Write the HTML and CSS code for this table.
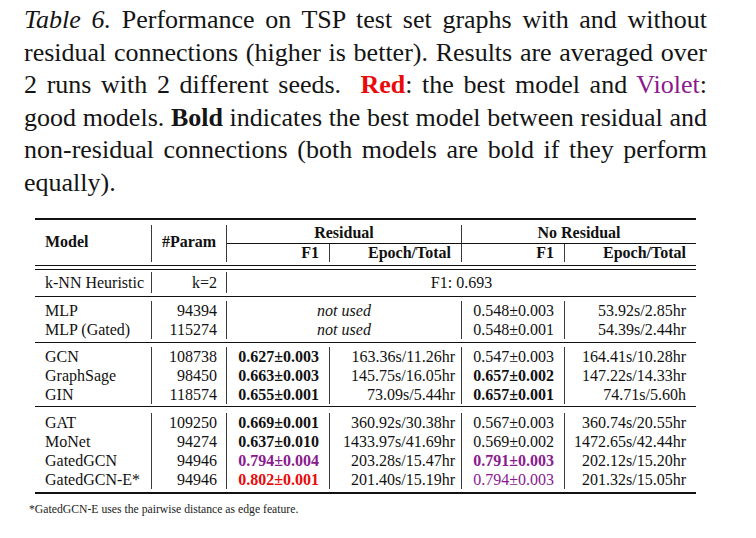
FILE: index.html
```html
<!DOCTYPE html>
<html lang="en">
<head>
<meta charset="utf-8">
<title>Table 6</title>
<link rel="stylesheet" href="styles.css">
</head>
<body>
<p class="caption"><span class="label">Table 6.</span> Performance on TSP test set graphs with and without residual connections (higher is better). Results are averaged over 2 runs with 2 different seeds.&nbsp; <b class="red">Red</b>: the best model and <span class="violet">Violet</span>: good models. <b>Bold</b> indicates the best model between residual and non-residual connections (both models are bold if they perform equally).</p>

<div class="table-wrap">
<table class="results">
  <colgroup>
    <col class="c-model"><col class="c-param"><col class="c-f1"><col class="c-ep"><col class="c-f1b"><col class="c-ep2">
  </colgroup>
  <tr class="rule"><td colspan="6"><div class="line thick top"></div></td></tr>
  <tr class="head1">
    <th rowspan="2" class="model vr">Model</th>
    <th rowspan="2" class="param vr">#Param</th>
    <th colspan="2" class="group vr">Residual</th>
    <th colspan="2" class="group">No Residual</th>
  </tr>
  <tr class="head2">
    <th class="f1 vr">F1</th>
    <th class="ep vr">Epoch/Total</th>
    <th class="f1 vr">F1</th>
    <th class="ep2">Epoch/Total</th>
  </tr>
  <tr class="rule"><td colspan="6"><div class="line double"></div></td></tr>
  <tr class="knn">
    <td class="model vr">k-NN Heuristic</td>
    <td class="param vr">k=2</td>
    <td colspan="4" class="center">F1: 0.693</td>
  </tr>
  <tr class="rule"><td colspan="6"><div class="line mid r1"></div></td></tr>
  <tr>
    <td class="model vr">MLP</td><td class="param vr">94394</td>
    <td colspan="2" class="center nu vr">not used</td>
    <td class="f1 vr">0.548±0.003</td><td class="ep2">53.92s/2.85hr</td>
  </tr>
  <tr>
    <td class="model vr">MLP (Gated)</td><td class="param vr">115274</td>
    <td colspan="2" class="center nu vr">not used</td>
    <td class="f1 vr">0.548±0.001</td><td class="ep2">54.39s/2.44hr</td>
  </tr>
  <tr class="rule"><td colspan="6"><div class="line mid r2"></div></td></tr>
  <tr>
    <td class="model vr">GCN</td><td class="param vr">108738</td>
    <td class="f1 vr"><b>0.627±0.003</b></td><td class="ep vr">163.36s/11.26hr</td>
    <td class="f1 vr">0.547±0.003</td><td class="ep2">164.41s/10.28hr</td>
  </tr>
  <tr>
    <td class="model vr">GraphSage</td><td class="param vr">98450</td>
    <td class="f1 vr"><b>0.663±0.003</b></td><td class="ep vr">145.75s/16.05hr</td>
    <td class="f1 vr"><b>0.657±0.002</b></td><td class="ep2">147.22s/14.33hr</td>
  </tr>
  <tr>
    <td class="model vr">GIN</td><td class="param vr">118574</td>
    <td class="f1 vr"><b>0.655±0.001</b></td><td class="ep vr">73.09s/5.44hr</td>
    <td class="f1 vr"><b>0.657±0.001</b></td><td class="ep2">74.71s/5.60h</td>
  </tr>
  <tr class="rule"><td colspan="6"><div class="line mid r3"></div></td></tr>
  <tr>
    <td class="model vr">GAT</td><td class="param vr">109250</td>
    <td class="f1 vr"><b>0.669±0.001</b></td><td class="ep vr">360.92s/30.38hr</td>
    <td class="f1 vr">0.567±0.003</td><td class="ep2">360.74s/20.55hr</td>
  </tr>
  <tr>
    <td class="model vr">MoNet</td><td class="param vr">94274</td>
    <td class="f1 vr"><b>0.637±0.010</b></td><td class="ep vr">1433.97s/41.69hr</td>
    <td class="f1 vr">0.569±0.002</td><td class="ep2">1472.65s/42.44hr</td>
  </tr>
  <tr>
    <td class="model vr">GatedGCN</td><td class="param vr">94946</td>
    <td class="f1 vr"><b class="violet">0.794±0.004</b></td><td class="ep vr">203.28s/15.47hr</td>
    <td class="f1 vr"><b class="violet">0.791±0.003</b></td><td class="ep2">202.12s/15.20hr</td>
  </tr>
  <tr>
    <td class="model vr">GatedGCN-E*</td><td class="param vr">94946</td>
    <td class="f1 vr"><b class="red">0.802±0.001</b></td><td class="ep vr">201.40s/15.19hr</td>
    <td class="f1 vr"><span class="violet">0.794±0.003</span></td><td class="ep2">201.32s/15.05hr</td>
  </tr>
  <tr class="rule"><td colspan="6"><div class="line thick bottom"></div></td></tr>
</table>
<p class="footnote">*GatedGCN-E uses the pairwise distance as edge feature.</p>
</div>
</body>
</html>
```

FILE: styles.css
```css
html, body {
  background: #ffffff;
}

body {
  margin: 0;
  padding: 4px 0 0 24px;
  font-family: "Liberation Serif", "Times New Roman", serif;
  color: #141414;
}

.caption {
  margin: 0;
  width: 683px;
  font-size: 26px;
  line-height: 32.6px;
  text-align: justify;
}

.caption .label {
  font-style: italic;
}

.red {
  color: #ea0a0a;
  font-weight: bold;
}

.violet {
  color: #8a1a8e;
}

.table-wrap {
  margin-top: 18px;
}

.results {
  margin-left: 11px;
  width: 661px;
  table-layout: fixed;
  border-collapse: separate;
  border-spacing: 0;
  font-size: 16px;
  color: #111;
}

.c-model { width: 117px; }
.c-param { width: 75px; }
.c-f1 { width: 103px; }
.c-ep { width: 132px; }
.c-f1b { width: 103px; }
.c-ep2 { width: 131px; }

.results th,
.results td {
  padding: 0;
  white-space: nowrap;
  vertical-align: middle;
  line-height: 19px;
  height: 19px;
}

.results th {
  font-weight: bold;
}

.results .vr {
  border-right: 1px solid #3a3a3a;
}

.results .model {
  text-align: left;
  padding-left: 10px;
}

.results th.model,
.results th.param {
  height: 35px;
  line-height: 18px;
  padding-bottom: 2px;
}

.results .param {
  text-align: right;
  padding-right: 9px;
}

.results th.param {
  text-align: center;
  padding-right: 0;
}

.results .f1 {
  text-align: right;
  padding-right: 10px;
}

.results .ep {
  text-align: right;
  padding-right: 6px;
}

.results th.ep {
  padding-right: 10px;
}

.results .ep2 {
  text-align: right;
  padding-right: 10px;
}

.results .center {
  text-align: center;
}

.results .nu {
  font-style: italic;
}

.results .group {
  text-align: center;
  border-bottom: 1px solid #111;
  height: 16px;
  line-height: 16px;
  padding-bottom: 2px;
}

.results .head2 th {
  height: 17px;
  line-height: 17px;
  padding-bottom: 1px;
}

.results .knn td {
  height: 21px;
  line-height: 21px;
}

.results .rule td {
  height: auto;
  line-height: 0;
  padding: 0;
}

.line {
  background: #111;
  height: 1px;
}

.line.thick {
  height: 2px;
}

.line.top {
  margin-bottom: 5px;
}

.line.double {
  height: 3px;
  background: transparent;
  border-top: 1px solid #111;
  border-bottom: 1px solid #111;
  margin: 3px 0 2px;
}

.line.r1 { margin: 3px 0 4px; }
.line.r2 { margin: 3px 0 4px; }
.line.r3 { margin: 2px 0 6px; }

.line.bottom {
  margin-top: 3px;
}

.footnote {
  margin: 9px 0 0 5px;
  font-size: 11.7px;
  line-height: 14px;
  color: #222;
}
```
